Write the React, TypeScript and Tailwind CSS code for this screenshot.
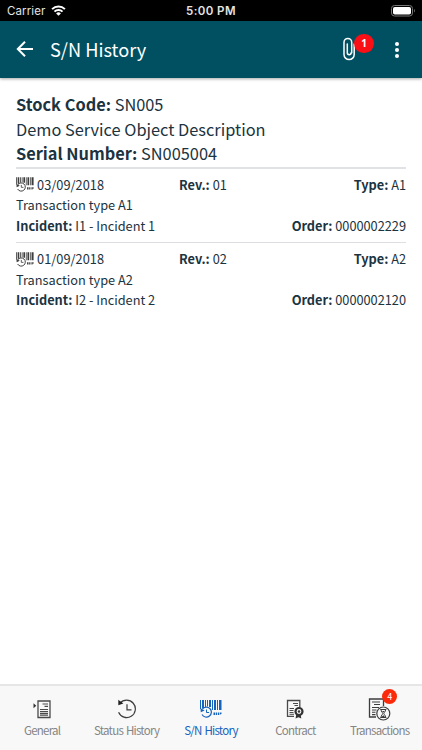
import type { ReactNode } from 'react';

interface HistoryEntry {
    date: string;
    revision: string;
    type: string;
    description: string;
    incident: string;
    order: string;
}

interface Tab {
    label: string;
    icon: ReactNode;
    active?: boolean;
    badge?: number;
}

const entries: HistoryEntry[] = [
    {
        date: '03/09/2018',
        revision: '01',
        type: 'A1',
        description: 'Transaction type A1',
        incident: 'I1 - Incident 1',
        order: '0000002229',
    },
    {
        date: '01/09/2018',
        revision: '02',
        type: 'A2',
        description: 'Transaction type A2',
        incident: 'I2 - Incident 2',
        order: '0000002120',
    },
];

function BarcodeHistoryIcon({ className }: { className?: string }) {
    return (
        <svg viewBox="0 0 22 18" className={className} fill="currentColor">
            <path d="M0 0h1v9H0zM2 0h2v8H2zM5 0h1v7H5zM7 0h1v6.500H7zM9 0h2v7H9zM12 0h1v10h-1zM14 0h2v10h-2zM17 0h1v10h-1zM19 0h2.500v10H19z" />
            <path d="M2.300 9.200A5 5 0 1 1 2 14.500" fill="none" stroke="currentColor" strokeWidth="1.200" />
            <path d="M.5 8.200 4.600 10.500.8 12.300z" />
            <path d="M6.500 9.500v3h2.600" fill="none" stroke="currentColor" strokeWidth="1" />
            <path d="M13.500 12.500h1.800v2.500h-1.800zM16 12.500h1v2.500h-1zM17.800 12.500h1.200v2.500h-1.200zM19.700 12.500h1.800v1.600h-1.100v.9h-.7z" />
        </svg>
    );
}

function GeneralIcon() {
    return (
        <svg viewBox="0 0 18 19" className="h-[19px] w-[18px]" fill="none" stroke="#4a4a4a">
            <path d="M5 1h12v16.500H5z" strokeWidth="1.300" />
            <path d="M9.500 4h5.500M11.500 6.300h3.500M7 9.500h8M7 11.500h8M7 13.300h8M7 15.200h8" strokeWidth="1.200" />
            <path d="M.5 3.200 3.300 5.700.5 8.200z" fill="#333" stroke="none" />
        </svg>
    );
}

function StatusHistoryIcon() {
    return (
        <svg viewBox="0 0 20 20" className="h-5 w-5" fill="none" stroke="#3d3d3d">
            <path d="M3 4.300A8.700 8.700 0 1 1 1.600 13.200" strokeWidth="1.200" />
            <path d="M10 5.300v5.500h4.500" strokeWidth="1.200" />
            <path d="M1.300.8v5.400l5-1.600z" fill="#222" stroke="none" />
        </svg>
    );
}

function ContractIcon() {
    return (
        <svg viewBox="0 0 18 20" className="h-5 w-[18px]" fill="none" stroke="#4a4a4a">
            <path d="M8 17.300H1.500V1.500h12.300v7" strokeWidth="1.300" />
            <path d="M7 4.500h5M8.500 6.500h3.500M3.500 9.500h4.500M3.500 11.500h4M3.500 13.500h4M3.500 15.300h4.500" strokeWidth="1" />
            <path d="m10.300 15.500-.8 4 3-1.300 2.800 1.300-.7-4z" fill="#333" stroke="none" />
            <circle cx="13" cy="12.500" r="3.500" stroke="#333" strokeWidth="2.200" fill="#f8f8f8" />
            <circle cx="13" cy="12.500" r="1.200" fill="#333" stroke="none" />
        </svg>
    );
}

function TransactionsIcon() {
    return (
        <svg viewBox="0 0 23 23" className="h-[23px] w-[23px]" fill="none" stroke="#3d3d3d">
            <path d="M8 19H1.500V1h14v7" strokeWidth="1.300" />
            <path d="M4 4h8M6 6.500h6M4 9.500h7M4 12h4.500M4 14.300h3.500M4 16.600h3.500" strokeWidth="1.100" />
            <circle cx="15.300" cy="15.500" r="6.500" strokeWidth="1.200" fill="#f8f8f8" />
            <path d="M12.300 11.500h6M12.300 19.500h6M13 11.500c0 2.500 1.800 3 1.800 4s-1.800 1.500-1.800 4M17.600 11.500c0 2.500-1.800 3-1.800 4s1.800 1.500 1.800 4" strokeWidth="1" />
            <path d="m13.400 19.300 1.900-2 1.900 2zM14 13h2.600l-1.300 1.500z" fill="#333" stroke="none" />
        </svg>
    );
}

const tabs: Tab[] = [
    { label: 'General', icon: <GeneralIcon /> },
    { label: 'Status History', icon: <StatusHistoryIcon /> },
    { label: 'S/N History', icon: <BarcodeHistoryIcon className="h-[18px] w-[22px]" />, active: true },
    { label: 'Contract', icon: <ContractIcon /> },
    { label: 'Transactions', icon: <TransactionsIcon />, badge: 4 },
];

function StatusBar() {
    return (
        <div className="grid h-[21px] shrink-0 grid-cols-3 items-center bg-black px-[7px] pt-[2px] font-['Inter','Roboto',sans-serif] text-[11.5px] text-[#e4e4e4]">
            <div className="flex items-center gap-[6px]">
                <span className="tracking-[0.1px]">Carrier</span>
                <svg viewBox="0 0 16 12" className="-mt-[3px] h-[11px] w-[15px]" fill="none" stroke="#fff" strokeWidth="2.200">
                    <path d="M1 4.500a10 10 0 0 1 14 0M3.600 7.200a6.300 6.300 0 0 1 8.800 0" />
                    <path d="M5.400 9.200a3.700 3.700 0 0 1 5.200 0L8 11.800z" fill="#fff" stroke="none" />
                </svg>
            </div>
            <span className="text-center font-semibold tracking-[0.4px]">5:00 PM</span>
            <div className="flex justify-end">
                <svg viewBox="0 0 25 12" className="-mt-px -mr-px h-[12px] w-[25px]">
                    <rect x=".5" y=".5" width="21" height="10.500" rx="3" fill="none" stroke="#777" />
                    <rect x="2" y="2" width="18" height="7.500" rx="1.800" fill="#fff" />
                    <path d="M23 4v3.500c1.200-.4 1.200-3 0-3.500z" fill="#777" />
                </svg>
            </div>
        </div>
    );
}

function Header() {
    return (
        <header className="flex h-[57px] shrink-0 items-center bg-[#005062] pr-[23px] pl-[16px] text-white shadow-[0_1px_3px_rgba(0,0,0,0.35)]">
            <svg viewBox="0 0 18 18" className="-mt-px h-[18px] w-[18px]" fill="none" stroke="currentColor" strokeWidth="2">
                <path d="M17 9H2M9 1.800 1.800 9 9 16.200" />
            </svg>
            <h1 className="-mt-[2px] ml-[16px] flex-1 text-[18.2px] leading-[26px]">S/N History</h1>
            <div className="relative mr-[39px]">
                <svg viewBox="0 0 13 24" className="-mt-px h-6 w-[13px]" fill="none" stroke="currentColor" strokeWidth="1.500" strokeLinecap="round">
                    <path d="M4.300 7v8.800a1.900 1.900 0 0 0 3.800 0M8.700 15.800V5.300a3.850 3.850 0 0 0-7.700 0v12.200a5.100 5.100 0 0 0 10.200 0V7" />
                </svg>
                <span className="absolute -top-[4px] left-[11px] flex h-[19px] w-5 items-center justify-center rounded-full bg-[#f91016] font-['Noto_Sans',sans-serif] text-[10px] font-bold">
                    1
                </span>
            </div>
            <svg viewBox="0 0 4 16" className="h-4 w-1" fill="currentColor">
                <circle cx="2" cy="2" r="2" />
                <circle cx="2" cy="8" r="2" />
                <circle cx="2" cy="14" r="2" />
            </svg>
        </header>
    );
}

function EntryRow({ entry }: { entry: HistoryEntry }) {
    return (
        <li className="border-b border-[#dcdee2] pt-[6px] pb-[6px] text-[12.75px] leading-[20.500px] last:border-b-0">
            <div className="grid grid-cols-[163px_1fr_1fr]">
                <div className="flex items-center gap-[3px]">
                    <BarcodeHistoryIcon className="h-[15px] w-[18px] text-[#3d3d3d]" />
                    <span className="tracking-[0.05px]">{entry.date}</span>
                </div>
                <span>
                    <b>Rev.:</b> {entry.revision}
                </span>
                <span className="text-right">
                    <b>Type:</b> {entry.type}
                </span>
            </div>
            <p>{entry.description}</p>
            <div className="flex justify-between">
                <span>
                    <b>Incident:</b> {entry.incident}
                </span>
                <span>
                    <b>Order:</b> {entry.order}
                </span>
            </div>
        </li>
    );
}

function TabBar() {
    return (
        <nav className="grid h-[66px] shrink-0 grid-cols-5 border-t-2 border-[#e6e6e6] bg-[#f8f8f8]">
            {tabs.map((tab) => (
                <div
                    key={tab.label}
                    className={`flex flex-col items-center pt-[11px] ${tab.active ? 'text-[#1663be]' : 'text-[#858585]'}`}
                >
                    <div className="relative flex h-6 items-center justify-center">
                        {tab.icon}
                        {tab.badge && (
                            <span className="absolute -top-[8px] left-[14px] flex h-[15px] w-[15px] items-center justify-center rounded-full bg-[#fa2a0a] text-[9px] text-white">
                                {tab.badge}
                            </span>
                        )}
                    </div>
                    <span className="mt-px text-[11.5px] leading-4 tracking-[-0.75px] [word-spacing:1px] whitespace-nowrap">
                        {tab.label}
                    </span>
                </div>
            ))}
        </nav>
    );
}

export default function App() {
    return (
        <div className="flex h-screen flex-col overflow-hidden bg-white font-['Noto_Sans_CJK_SC','Noto_Sans',sans-serif] text-[#1c3340]">
            <StatusBar />
            <Header />
            <main className="flex-1 px-[16px] pt-[14px]">
                <div className="border-b-2 border-[#e0e2e5] pb-px text-[16.35px] leading-[24.500px]">
                    <p>
                        <b>Stock Code:</b> SN005
                    </p>
                    <p>Demo Service Object Description</p>
                    <p>
                        <b>Serial Number:</b> SN005004
                    </p>
                </div>
                <ul>
                    {entries.map((entry) => (
                        <EntryRow key={entry.order} entry={entry} />
                    ))}
                </ul>
            </main>
            <TabBar />
        </div>
    );
}
